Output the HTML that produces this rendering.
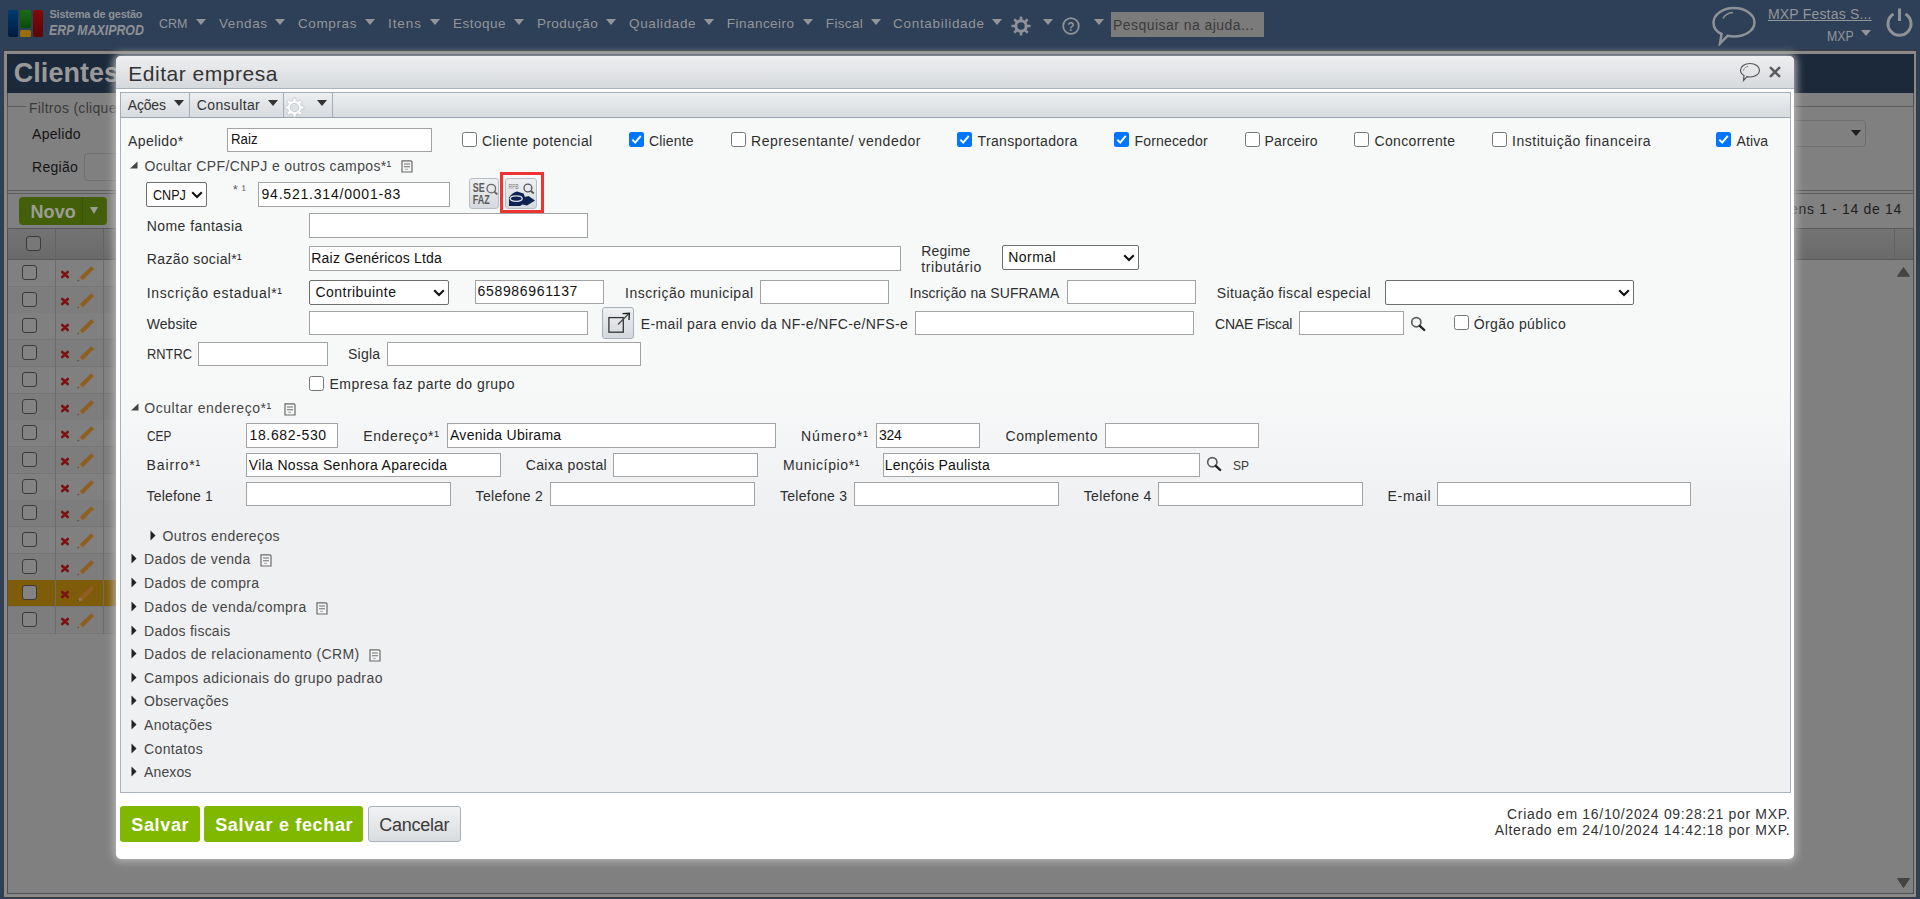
<!DOCTYPE html><html><head><meta charset="utf-8"><title>Editar empresa</title><style>
html,body{margin:0;padding:0;}body{width:1920px;height:899px;overflow:hidden;position:relative;background:#808080;font-family:"Liberation Sans",sans-serif;}
.t{position:absolute;white-space:nowrap;}
</style></head><body>
<div style="position:absolute;left:0px;top:0px;width:1920px;height:51px;box-sizing:border-box;background:#2e4058;"></div>
<div style="position:absolute;left:0px;top:50px;width:1920px;height:849px;box-sizing:border-box;background:#2e4058;"></div>
<div style="position:absolute;left:3px;top:50px;width:1914px;height:848px;box-sizing:border-box;background:#898989;border:1px solid #3c3c3c;"></div>
<div style="position:absolute;left:7px;top:54px;width:1907px;height:840px;box-sizing:border-box;background:#808080;border:1px solid #4e5058;"></div>
<div style="position:absolute;left:7px;top:54px;width:1907px;height:39px;box-sizing:border-box;background:#1b293a;"></div>
<div class="t" style="left:13.8px;top:57.64px;font-size:27px;line-height:31px;color:#999999;font-weight:bold;letter-spacing:0.029px;">Clientes</div>
<div style="position:absolute;left:7.5px;top:10px;width:10.5px;height:27px;box-sizing:border-box;background:linear-gradient(#003a6e,#001c3c);border-radius:2px;"></div>
<div style="position:absolute;left:20.4px;top:10px;width:10.5px;height:17.5px;box-sizing:border-box;background:linear-gradient(#1d6e14,#0b4a08);border-radius:2px;"></div>
<div style="position:absolute;left:20.4px;top:29.5px;width:10.5px;height:7.5px;box-sizing:border-box;background:#9a6e0c;border-radius:1.5px;"></div>
<div style="position:absolute;left:32.9px;top:10px;width:10.5px;height:27px;box-sizing:border-box;background:linear-gradient(#820a0a,#5c0505);border-radius:2px;"></div>
<div class="t" style="left:49.5px;top:8.44px;font-size:11px;line-height:13px;color:#8e9094;font-weight:bold;letter-spacing:-0.219px;">Sistema de gestão</div>
<div class="t" style="left:48.8px;top:22.15px;font-size:14px;line-height:16px;color:#8e9094;font-weight:bold;letter-spacing:0px;font-style:italic;transform:scaleX(0.8815);transform-origin:0px 0;">ERP MAXIPROD</div>
<div class="t" style="left:159px;top:16.32px;font-size:13.5px;line-height:16px;color:#939598;font-weight:normal;letter-spacing:0px;transform:scaleX(0.9258);transform-origin:0px 0;">CRM</div>
<svg style="position:absolute;left:196px;top:19px" width="10" height="6" viewBox="0 0 10 6"><path d="M0 0 H10 L5 6 Z" fill="#939598"/></svg>
<div class="t" style="left:219px;top:16.32px;font-size:13.5px;line-height:16px;color:#939598;font-weight:normal;letter-spacing:0.6px;">Vendas</div>
<svg style="position:absolute;left:275px;top:19px" width="10" height="6" viewBox="0 0 10 6"><path d="M0 0 H10 L5 6 Z" fill="#939598"/></svg>
<div class="t" style="left:298px;top:16.32px;font-size:13.5px;line-height:16px;color:#939598;font-weight:normal;letter-spacing:0.617px;">Compras</div>
<svg style="position:absolute;left:364.5px;top:19px" width="10" height="6" viewBox="0 0 10 6"><path d="M0 0 H10 L5 6 Z" fill="#939598"/></svg>
<div class="t" style="left:388px;top:16.32px;font-size:13.5px;line-height:16px;color:#939598;font-weight:normal;letter-spacing:0.925px;">Itens</div>
<svg style="position:absolute;left:429.5px;top:19px" width="10" height="6" viewBox="0 0 10 6"><path d="M0 0 H10 L5 6 Z" fill="#939598"/></svg>
<div class="t" style="left:453px;top:16.32px;font-size:13.5px;line-height:16px;color:#939598;font-weight:normal;letter-spacing:0.5px;">Estoque</div>
<svg style="position:absolute;left:513.8px;top:19px" width="10" height="6" viewBox="0 0 10 6"><path d="M0 0 H10 L5 6 Z" fill="#939598"/></svg>
<div class="t" style="left:537px;top:16.32px;font-size:13.5px;line-height:16px;color:#939598;font-weight:normal;letter-spacing:0.429px;">Produção</div>
<svg style="position:absolute;left:606px;top:19px" width="10" height="6" viewBox="0 0 10 6"><path d="M0 0 H10 L5 6 Z" fill="#939598"/></svg>
<div class="t" style="left:629px;top:16.32px;font-size:13.5px;line-height:16px;color:#939598;font-weight:normal;letter-spacing:0.625px;">Qualidade</div>
<svg style="position:absolute;left:703.8px;top:19px" width="10" height="6" viewBox="0 0 10 6"><path d="M0 0 H10 L5 6 Z" fill="#939598"/></svg>
<div class="t" style="left:726.8px;top:16.32px;font-size:13.5px;line-height:16px;color:#939598;font-weight:normal;letter-spacing:0.467px;">Financeiro</div>
<svg style="position:absolute;left:802.5px;top:19px" width="10" height="6" viewBox="0 0 10 6"><path d="M0 0 H10 L5 6 Z" fill="#939598"/></svg>
<div class="t" style="left:825.8px;top:16.32px;font-size:13.5px;line-height:16px;color:#939598;font-weight:normal;letter-spacing:0.34px;">Fiscal</div>
<svg style="position:absolute;left:870.5px;top:19px" width="10" height="6" viewBox="0 0 10 6"><path d="M0 0 H10 L5 6 Z" fill="#939598"/></svg>
<div class="t" style="left:893px;top:16.32px;font-size:13.5px;line-height:16px;color:#939598;font-weight:normal;letter-spacing:0.708px;">Contabilidade</div>
<svg style="position:absolute;left:992px;top:19px" width="10" height="6" viewBox="0 0 10 6"><path d="M0 0 H10 L5 6 Z" fill="#939598"/></svg>
<svg style="position:absolute;left:1011px;top:16px" width="20" height="20" viewBox="0 0 20 20"><g fill="#8e9296"><rect x="8.7" y="0.5" width="2.6" height="5" rx="0.6" transform="rotate(0 10 10)"/><rect x="8.7" y="0.5" width="2.6" height="5" rx="0.6" transform="rotate(45 10 10)"/><rect x="8.7" y="0.5" width="2.6" height="5" rx="0.6" transform="rotate(90 10 10)"/><rect x="8.7" y="0.5" width="2.6" height="5" rx="0.6" transform="rotate(135 10 10)"/><rect x="8.7" y="0.5" width="2.6" height="5" rx="0.6" transform="rotate(180 10 10)"/><rect x="8.7" y="0.5" width="2.6" height="5" rx="0.6" transform="rotate(225 10 10)"/><rect x="8.7" y="0.5" width="2.6" height="5" rx="0.6" transform="rotate(270 10 10)"/><rect x="8.7" y="0.5" width="2.6" height="5" rx="0.6" transform="rotate(315 10 10)"/></g><circle cx="10" cy="10" r="5.2" fill="none" stroke="#8e9296" stroke-width="3"/></svg>
<svg style="position:absolute;left:1043px;top:19px" width="10" height="6" viewBox="0 0 10 6"><path d="M0 0 H10 L5 6 Z" fill="#939598"/></svg>
<svg style="position:absolute;left:1062px;top:17px" width="18" height="18" viewBox="0 0 18 18"><circle cx="9" cy="9" r="7.8" fill="none" stroke="#8e9296" stroke-width="1.8"/><text x="9" y="13.5" text-anchor="middle" font-family="Liberation Sans" font-size="12" font-weight="bold" fill="#8e9296">?</text></svg>
<svg style="position:absolute;left:1094px;top:19px" width="10" height="6" viewBox="0 0 10 6"><path d="M0 0 H10 L5 6 Z" fill="#939598"/></svg>
<div style="position:absolute;left:1111px;top:12px;width:153px;height:25px;box-sizing:border-box;background:#7b7b7b;"></div>
<div class="t" style="left:1113px;top:16.65px;font-size:14px;line-height:16px;color:#3c3c3c;font-weight:normal;letter-spacing:0.45px;">Pesquisar na ajuda...</div>
<svg style="position:absolute;left:1711px;top:5px" width="46" height="41" viewBox="0 0 46 41"><path d="M23 3 C34 3 43.5 9.5 43.5 17.5 C43.5 25.5 34 31.5 23 31.5 C20.5 31.5 18.5 31.3 16.5 30.8 L9 38.5 L10.5 29 C5 26.5 2.5 22.5 2.5 17.5 C2.5 9.5 12 3 23 3 Z" fill="none" stroke="#8e9296" stroke-width="2.5"/><path d="M12 13.5 C14 9.5 18 7.8 22 7.5" fill="none" stroke="#8e9296" stroke-width="1.5"/></svg>
<div class="t" style="left:1768px;top:6.15px;font-size:14px;line-height:16px;color:#939598;font-weight:normal;letter-spacing:0.186px;text-decoration:underline;">MXP Festas S...</div>
<div class="t" style="left:1826.6px;top:27.65px;font-size:14px;line-height:16px;color:#939598;font-weight:normal;letter-spacing:0px;transform:scaleX(0.8800);transform-origin:0px 0;">MXP</div>
<svg style="position:absolute;left:1861px;top:30px" width="10" height="6" viewBox="0 0 10 6"><path d="M0 0 H10 L5 6 Z" fill="#939598"/></svg>
<svg style="position:absolute;left:1884px;top:6px" width="31" height="32" viewBox="0 0 31 32"><path d="M9.5 8 A11.5 11.5 0 1 0 21.5 8" fill="none" stroke="#8e9296" stroke-width="3"/><path d="M15.5 2.5 V15" stroke="#8e9296" stroke-width="3"/></svg>
<div style="position:absolute;left:7px;top:106px;width:1907px;height:85px;box-sizing:border-box;border:1px solid #5c5c5c;"></div>
<div style="position:absolute;left:26px;top:100px;width:100px;height:14px;box-sizing:border-box;background:#808080;"></div>
<div class="t" style="left:29px;top:100.15px;font-size:14px;line-height:16px;color:#3a3a3a;font-weight:normal;letter-spacing:0.3px;">Filtros (clique</div>
<div class="t" style="left:32px;top:126.15px;font-size:14px;line-height:16px;color:#141414;font-weight:normal;letter-spacing:0.3px;">Apelido</div>
<div class="t" style="left:32px;top:159.15px;font-size:14px;line-height:16px;color:#141414;font-weight:normal;letter-spacing:0.3px;">Região</div>
<div style="position:absolute;left:84px;top:153px;width:60px;height:28px;box-sizing:border-box;border:1px solid #6e6e6e;border-radius:4px;"></div>
<div style="position:absolute;left:1700px;top:120px;width:166px;height:27px;box-sizing:border-box;border:1px solid #6e6e6e;border-radius:4px;"></div>
<svg style="position:absolute;left:1851px;top:130px" width="10" height="6" viewBox="0 0 10 6"><path d="M0 0 H10 L5 6 Z" fill="#1e1e1e"/></svg>
<div style="position:absolute;left:7px;top:193px;width:1907px;height:36px;box-sizing:border-box;border:1px solid #5c5c5c;"></div>
<div class="t" style="left:1790px;top:201.15px;font-size:14px;line-height:16px;color:#1e1e1e;font-weight:normal;letter-spacing:0.667px;">ens 1 - 14 de 14</div>
<div style="position:absolute;left:19px;top:197px;width:88px;height:28px;box-sizing:border-box;background:#435f0a;border-radius:4px;"></div>
<div style="position:absolute;left:82px;top:197px;width:1px;height:28px;box-sizing:border-box;background:#3a5408;"></div>
<div class="t" style="left:30.5px;top:202.26px;font-size:18px;line-height:21px;color:#9b9e95;font-weight:bold;letter-spacing:0.1px;">Novo</div>
<svg style="position:absolute;left:90px;top:207px" width="8" height="7" viewBox="0 0 8 7"><path d="M0 0 H8 L4 7 Z" fill="#9b9e95"/></svg>
<div style="position:absolute;left:8px;top:228px;width:1905px;height:32px;box-sizing:border-box;background:linear-gradient(#737373,#6a6a6a);border-top:1px solid #585858;border-bottom:1px solid #585858;"></div>
<div style="position:absolute;left:55px;top:229px;width:1px;height:31px;box-sizing:border-box;background:#626262;"></div>
<div style="position:absolute;left:103px;top:229px;width:1px;height:31px;box-sizing:border-box;background:#626262;"></div>
<div style="position:absolute;left:1894px;top:229px;width:1px;height:31px;box-sizing:border-box;background:#626262;"></div>
<div style="position:absolute;left:26px;top:236px;width:15px;height:15px;box-sizing:border-box;border:1.5px solid #3a3a3a;border-radius:3px;background:#787878;"></div>
<div style="position:absolute;left:8px;top:260px;width:108px;height:27px;box-sizing:border-box;background:#808080;border-bottom:1px solid #757575;"></div>
<div style="position:absolute;left:55px;top:260px;width:1px;height:27px;box-sizing:border-box;background:#6c6c6c;"></div>
<div style="position:absolute;left:103px;top:260px;width:1px;height:27px;box-sizing:border-box;background:#6c6c6c;"></div>
<div style="position:absolute;left:22px;top:265px;width:15px;height:15px;box-sizing:border-box;border:1.5px solid #3a3a3a;border-radius:3px;background:#838383;"></div>
<svg style="position:absolute;left:60px;top:270px" width="10" height="9" viewBox="0 0 10 9"><path d="M2.2 2 L7.8 7 M7.8 2 L2.2 7" stroke="#7a1212" stroke-width="2.6" stroke-linecap="round"/></svg>
<svg style="position:absolute;left:76px;top:264px" width="19" height="19" viewBox="0 0 19 19"><path d="M3.8 13.2 L15.2 2.2 L18 5 L6.8 16.2 Z" fill="#8f5e22"/><path d="M1.2 17.6 L3.8 13.2 L6.8 16.2 Z" fill="#8a7a60"/><path d="M1.2 17.6 L2.2 15.8 L3 16.6 Z" fill="#333"/></svg>
<div style="position:absolute;left:8px;top:287px;width:108px;height:27px;box-sizing:border-box;background:#7d7d7d;border-bottom:1px solid #757575;"></div>
<div style="position:absolute;left:55px;top:287px;width:1px;height:27px;box-sizing:border-box;background:#6c6c6c;"></div>
<div style="position:absolute;left:103px;top:287px;width:1px;height:27px;box-sizing:border-box;background:#6c6c6c;"></div>
<div style="position:absolute;left:22px;top:292px;width:15px;height:15px;box-sizing:border-box;border:1.5px solid #3a3a3a;border-radius:3px;background:#838383;"></div>
<svg style="position:absolute;left:60px;top:297px" width="10" height="9" viewBox="0 0 10 9"><path d="M2.2 2 L7.8 7 M7.8 2 L2.2 7" stroke="#7a1212" stroke-width="2.6" stroke-linecap="round"/></svg>
<svg style="position:absolute;left:76px;top:291px" width="19" height="19" viewBox="0 0 19 19"><path d="M3.8 13.2 L15.2 2.2 L18 5 L6.8 16.2 Z" fill="#8f5e22"/><path d="M1.2 17.6 L3.8 13.2 L6.8 16.2 Z" fill="#8a7a60"/><path d="M1.2 17.6 L2.2 15.8 L3 16.6 Z" fill="#333"/></svg>
<div style="position:absolute;left:8px;top:313px;width:108px;height:27px;box-sizing:border-box;background:#808080;border-bottom:1px solid #757575;"></div>
<div style="position:absolute;left:55px;top:313px;width:1px;height:27px;box-sizing:border-box;background:#6c6c6c;"></div>
<div style="position:absolute;left:103px;top:313px;width:1px;height:27px;box-sizing:border-box;background:#6c6c6c;"></div>
<div style="position:absolute;left:22px;top:318px;width:15px;height:15px;box-sizing:border-box;border:1.5px solid #3a3a3a;border-radius:3px;background:#838383;"></div>
<svg style="position:absolute;left:60px;top:323px" width="10" height="9" viewBox="0 0 10 9"><path d="M2.2 2 L7.8 7 M7.8 2 L2.2 7" stroke="#7a1212" stroke-width="2.6" stroke-linecap="round"/></svg>
<svg style="position:absolute;left:76px;top:317px" width="19" height="19" viewBox="0 0 19 19"><path d="M3.8 13.2 L15.2 2.2 L18 5 L6.8 16.2 Z" fill="#8f5e22"/><path d="M1.2 17.6 L3.8 13.2 L6.8 16.2 Z" fill="#8a7a60"/><path d="M1.2 17.6 L2.2 15.8 L3 16.6 Z" fill="#333"/></svg>
<div style="position:absolute;left:8px;top:340px;width:108px;height:27px;box-sizing:border-box;background:#7d7d7d;border-bottom:1px solid #757575;"></div>
<div style="position:absolute;left:55px;top:340px;width:1px;height:27px;box-sizing:border-box;background:#6c6c6c;"></div>
<div style="position:absolute;left:103px;top:340px;width:1px;height:27px;box-sizing:border-box;background:#6c6c6c;"></div>
<div style="position:absolute;left:22px;top:345px;width:15px;height:15px;box-sizing:border-box;border:1.5px solid #3a3a3a;border-radius:3px;background:#838383;"></div>
<svg style="position:absolute;left:60px;top:350px" width="10" height="9" viewBox="0 0 10 9"><path d="M2.2 2 L7.8 7 M7.8 2 L2.2 7" stroke="#7a1212" stroke-width="2.6" stroke-linecap="round"/></svg>
<svg style="position:absolute;left:76px;top:344px" width="19" height="19" viewBox="0 0 19 19"><path d="M3.8 13.2 L15.2 2.2 L18 5 L6.8 16.2 Z" fill="#8f5e22"/><path d="M1.2 17.6 L3.8 13.2 L6.8 16.2 Z" fill="#8a7a60"/><path d="M1.2 17.6 L2.2 15.8 L3 16.6 Z" fill="#333"/></svg>
<div style="position:absolute;left:8px;top:367px;width:108px;height:27px;box-sizing:border-box;background:#808080;border-bottom:1px solid #757575;"></div>
<div style="position:absolute;left:55px;top:367px;width:1px;height:27px;box-sizing:border-box;background:#6c6c6c;"></div>
<div style="position:absolute;left:103px;top:367px;width:1px;height:27px;box-sizing:border-box;background:#6c6c6c;"></div>
<div style="position:absolute;left:22px;top:372px;width:15px;height:15px;box-sizing:border-box;border:1.5px solid #3a3a3a;border-radius:3px;background:#838383;"></div>
<svg style="position:absolute;left:60px;top:377px" width="10" height="9" viewBox="0 0 10 9"><path d="M2.2 2 L7.8 7 M7.8 2 L2.2 7" stroke="#7a1212" stroke-width="2.6" stroke-linecap="round"/></svg>
<svg style="position:absolute;left:76px;top:371px" width="19" height="19" viewBox="0 0 19 19"><path d="M3.8 13.2 L15.2 2.2 L18 5 L6.8 16.2 Z" fill="#8f5e22"/><path d="M1.2 17.6 L3.8 13.2 L6.8 16.2 Z" fill="#8a7a60"/><path d="M1.2 17.6 L2.2 15.8 L3 16.6 Z" fill="#333"/></svg>
<div style="position:absolute;left:8px;top:394px;width:108px;height:27px;box-sizing:border-box;background:#7d7d7d;border-bottom:1px solid #757575;"></div>
<div style="position:absolute;left:55px;top:394px;width:1px;height:27px;box-sizing:border-box;background:#6c6c6c;"></div>
<div style="position:absolute;left:103px;top:394px;width:1px;height:27px;box-sizing:border-box;background:#6c6c6c;"></div>
<div style="position:absolute;left:22px;top:399px;width:15px;height:15px;box-sizing:border-box;border:1.5px solid #3a3a3a;border-radius:3px;background:#838383;"></div>
<svg style="position:absolute;left:60px;top:404px" width="10" height="9" viewBox="0 0 10 9"><path d="M2.2 2 L7.8 7 M7.8 2 L2.2 7" stroke="#7a1212" stroke-width="2.6" stroke-linecap="round"/></svg>
<svg style="position:absolute;left:76px;top:398px" width="19" height="19" viewBox="0 0 19 19"><path d="M3.8 13.2 L15.2 2.2 L18 5 L6.8 16.2 Z" fill="#8f5e22"/><path d="M1.2 17.6 L3.8 13.2 L6.8 16.2 Z" fill="#8a7a60"/><path d="M1.2 17.6 L2.2 15.8 L3 16.6 Z" fill="#333"/></svg>
<div style="position:absolute;left:8px;top:420px;width:108px;height:27px;box-sizing:border-box;background:#808080;border-bottom:1px solid #757575;"></div>
<div style="position:absolute;left:55px;top:420px;width:1px;height:27px;box-sizing:border-box;background:#6c6c6c;"></div>
<div style="position:absolute;left:103px;top:420px;width:1px;height:27px;box-sizing:border-box;background:#6c6c6c;"></div>
<div style="position:absolute;left:22px;top:425px;width:15px;height:15px;box-sizing:border-box;border:1.5px solid #3a3a3a;border-radius:3px;background:#838383;"></div>
<svg style="position:absolute;left:60px;top:430px" width="10" height="9" viewBox="0 0 10 9"><path d="M2.2 2 L7.8 7 M7.8 2 L2.2 7" stroke="#7a1212" stroke-width="2.6" stroke-linecap="round"/></svg>
<svg style="position:absolute;left:76px;top:424px" width="19" height="19" viewBox="0 0 19 19"><path d="M3.8 13.2 L15.2 2.2 L18 5 L6.8 16.2 Z" fill="#8f5e22"/><path d="M1.2 17.6 L3.8 13.2 L6.8 16.2 Z" fill="#8a7a60"/><path d="M1.2 17.6 L2.2 15.8 L3 16.6 Z" fill="#333"/></svg>
<div style="position:absolute;left:8px;top:447px;width:108px;height:27px;box-sizing:border-box;background:#7d7d7d;border-bottom:1px solid #757575;"></div>
<div style="position:absolute;left:55px;top:447px;width:1px;height:27px;box-sizing:border-box;background:#6c6c6c;"></div>
<div style="position:absolute;left:103px;top:447px;width:1px;height:27px;box-sizing:border-box;background:#6c6c6c;"></div>
<div style="position:absolute;left:22px;top:452px;width:15px;height:15px;box-sizing:border-box;border:1.5px solid #3a3a3a;border-radius:3px;background:#838383;"></div>
<svg style="position:absolute;left:60px;top:457px" width="10" height="9" viewBox="0 0 10 9"><path d="M2.2 2 L7.8 7 M7.8 2 L2.2 7" stroke="#7a1212" stroke-width="2.6" stroke-linecap="round"/></svg>
<svg style="position:absolute;left:76px;top:451px" width="19" height="19" viewBox="0 0 19 19"><path d="M3.8 13.2 L15.2 2.2 L18 5 L6.8 16.2 Z" fill="#8f5e22"/><path d="M1.2 17.6 L3.8 13.2 L6.8 16.2 Z" fill="#8a7a60"/><path d="M1.2 17.6 L2.2 15.8 L3 16.6 Z" fill="#333"/></svg>
<div style="position:absolute;left:8px;top:474px;width:108px;height:27px;box-sizing:border-box;background:#808080;border-bottom:1px solid #757575;"></div>
<div style="position:absolute;left:55px;top:474px;width:1px;height:27px;box-sizing:border-box;background:#6c6c6c;"></div>
<div style="position:absolute;left:103px;top:474px;width:1px;height:27px;box-sizing:border-box;background:#6c6c6c;"></div>
<div style="position:absolute;left:22px;top:479px;width:15px;height:15px;box-sizing:border-box;border:1.5px solid #3a3a3a;border-radius:3px;background:#838383;"></div>
<svg style="position:absolute;left:60px;top:484px" width="10" height="9" viewBox="0 0 10 9"><path d="M2.2 2 L7.8 7 M7.8 2 L2.2 7" stroke="#7a1212" stroke-width="2.6" stroke-linecap="round"/></svg>
<svg style="position:absolute;left:76px;top:478px" width="19" height="19" viewBox="0 0 19 19"><path d="M3.8 13.2 L15.2 2.2 L18 5 L6.8 16.2 Z" fill="#8f5e22"/><path d="M1.2 17.6 L3.8 13.2 L6.8 16.2 Z" fill="#8a7a60"/><path d="M1.2 17.6 L2.2 15.8 L3 16.6 Z" fill="#333"/></svg>
<div style="position:absolute;left:8px;top:500px;width:108px;height:27px;box-sizing:border-box;background:#7d7d7d;border-bottom:1px solid #757575;"></div>
<div style="position:absolute;left:55px;top:500px;width:1px;height:27px;box-sizing:border-box;background:#6c6c6c;"></div>
<div style="position:absolute;left:103px;top:500px;width:1px;height:27px;box-sizing:border-box;background:#6c6c6c;"></div>
<div style="position:absolute;left:22px;top:505px;width:15px;height:15px;box-sizing:border-box;border:1.5px solid #3a3a3a;border-radius:3px;background:#838383;"></div>
<svg style="position:absolute;left:60px;top:510px" width="10" height="9" viewBox="0 0 10 9"><path d="M2.2 2 L7.8 7 M7.8 2 L2.2 7" stroke="#7a1212" stroke-width="2.6" stroke-linecap="round"/></svg>
<svg style="position:absolute;left:76px;top:504px" width="19" height="19" viewBox="0 0 19 19"><path d="M3.8 13.2 L15.2 2.2 L18 5 L6.8 16.2 Z" fill="#8f5e22"/><path d="M1.2 17.6 L3.8 13.2 L6.8 16.2 Z" fill="#8a7a60"/><path d="M1.2 17.6 L2.2 15.8 L3 16.6 Z" fill="#333"/></svg>
<div style="position:absolute;left:8px;top:527px;width:108px;height:27px;box-sizing:border-box;background:#808080;border-bottom:1px solid #757575;"></div>
<div style="position:absolute;left:55px;top:527px;width:1px;height:27px;box-sizing:border-box;background:#6c6c6c;"></div>
<div style="position:absolute;left:103px;top:527px;width:1px;height:27px;box-sizing:border-box;background:#6c6c6c;"></div>
<div style="position:absolute;left:22px;top:532px;width:15px;height:15px;box-sizing:border-box;border:1.5px solid #3a3a3a;border-radius:3px;background:#838383;"></div>
<svg style="position:absolute;left:60px;top:537px" width="10" height="9" viewBox="0 0 10 9"><path d="M2.2 2 L7.8 7 M7.8 2 L2.2 7" stroke="#7a1212" stroke-width="2.6" stroke-linecap="round"/></svg>
<svg style="position:absolute;left:76px;top:531px" width="19" height="19" viewBox="0 0 19 19"><path d="M3.8 13.2 L15.2 2.2 L18 5 L6.8 16.2 Z" fill="#8f5e22"/><path d="M1.2 17.6 L3.8 13.2 L6.8 16.2 Z" fill="#8a7a60"/><path d="M1.2 17.6 L2.2 15.8 L3 16.6 Z" fill="#333"/></svg>
<div style="position:absolute;left:8px;top:554px;width:108px;height:27px;box-sizing:border-box;background:#7d7d7d;border-bottom:1px solid #757575;"></div>
<div style="position:absolute;left:55px;top:554px;width:1px;height:27px;box-sizing:border-box;background:#6c6c6c;"></div>
<div style="position:absolute;left:103px;top:554px;width:1px;height:27px;box-sizing:border-box;background:#6c6c6c;"></div>
<div style="position:absolute;left:22px;top:559px;width:15px;height:15px;box-sizing:border-box;border:1.5px solid #3a3a3a;border-radius:3px;background:#838383;"></div>
<svg style="position:absolute;left:60px;top:564px" width="10" height="9" viewBox="0 0 10 9"><path d="M2.2 2 L7.8 7 M7.8 2 L2.2 7" stroke="#7a1212" stroke-width="2.6" stroke-linecap="round"/></svg>
<svg style="position:absolute;left:76px;top:558px" width="19" height="19" viewBox="0 0 19 19"><path d="M3.8 13.2 L15.2 2.2 L18 5 L6.8 16.2 Z" fill="#8f5e22"/><path d="M1.2 17.6 L3.8 13.2 L6.8 16.2 Z" fill="#8a7a60"/><path d="M1.2 17.6 L2.2 15.8 L3 16.6 Z" fill="#333"/></svg>
<div style="position:absolute;left:8px;top:580px;width:108px;height:27px;box-sizing:border-box;background:#7f5c0a;border-bottom:1px solid #757575;"></div>
<div style="position:absolute;left:55px;top:580px;width:1px;height:27px;box-sizing:border-box;background:#6c6c6c;"></div>
<div style="position:absolute;left:103px;top:580px;width:1px;height:27px;box-sizing:border-box;background:#6c6c6c;"></div>
<div style="position:absolute;left:22px;top:585px;width:15px;height:15px;box-sizing:border-box;border:1.5px solid #3a3a3a;border-radius:3px;background:#838383;"></div>
<svg style="position:absolute;left:60px;top:590px" width="10" height="9" viewBox="0 0 10 9"><path d="M2.2 2 L7.8 7 M7.8 2 L2.2 7" stroke="#7a1212" stroke-width="2.6" stroke-linecap="round"/></svg>
<svg style="position:absolute;left:76px;top:584px" width="19" height="19" viewBox="0 0 19 19"><path d="M3.8 13.2 L15.2 2.2 L18 5 L6.8 16.2 Z" fill="#8f5e22"/><path d="M1.2 17.6 L3.8 13.2 L6.8 16.2 Z" fill="#8a7a60"/><path d="M1.2 17.6 L2.2 15.8 L3 16.6 Z" fill="#333"/></svg>
<div style="position:absolute;left:8px;top:607px;width:108px;height:27px;box-sizing:border-box;background:#7d7d7d;border-bottom:1px solid #757575;"></div>
<div style="position:absolute;left:55px;top:607px;width:1px;height:27px;box-sizing:border-box;background:#6c6c6c;"></div>
<div style="position:absolute;left:103px;top:607px;width:1px;height:27px;box-sizing:border-box;background:#6c6c6c;"></div>
<div style="position:absolute;left:22px;top:612px;width:15px;height:15px;box-sizing:border-box;border:1.5px solid #3a3a3a;border-radius:3px;background:#838383;"></div>
<svg style="position:absolute;left:60px;top:617px" width="10" height="9" viewBox="0 0 10 9"><path d="M2.2 2 L7.8 7 M7.8 2 L2.2 7" stroke="#7a1212" stroke-width="2.6" stroke-linecap="round"/></svg>
<svg style="position:absolute;left:76px;top:611px" width="19" height="19" viewBox="0 0 19 19"><path d="M3.8 13.2 L15.2 2.2 L18 5 L6.8 16.2 Z" fill="#8f5e22"/><path d="M1.2 17.6 L3.8 13.2 L6.8 16.2 Z" fill="#8a7a60"/><path d="M1.2 17.6 L2.2 15.8 L3 16.6 Z" fill="#333"/></svg>
<svg style="position:absolute;left:1897px;top:267px" width="13" height="10" viewBox="0 0 13 10"><path d="M0.8 9.2 H12.2 L6.5 0.8 Z" fill="#444" stroke="#444" stroke-width="1.2" stroke-linejoin="round"/></svg>
<svg style="position:absolute;left:1897px;top:878px" width="13" height="10" viewBox="0 0 13 10"><path d="M0.5 0.5 H12.5 L6.5 9.5 Z" fill="#444" stroke="#444" stroke-linejoin="round"/></svg>
<div style="position:absolute;left:116px;top:56px;width:1678px;height:803px;background:#fff;border-radius:5px;box-shadow:0 0 9px 2px rgba(185,185,185,1);"></div>
<div style="position:absolute;left:116px;top:56px;width:1678px;height:33px;box-sizing:border-box;background:linear-gradient(#eeeff1,#d6d9dc);border-bottom:1px solid #aab2bb;border-radius:5px 5px 0 0;"></div>
<div class="t" style="left:128.3px;top:62.32px;font-size:21px;line-height:24px;color:#333;font-weight:normal;letter-spacing:0.515px;">Editar empresa</div>
<svg style="position:absolute;left:1739px;top:62px" width="22" height="20" viewBox="0 0 22 20"><path d="M11 1.5 C16.5 1.5 20.5 4.5 20.5 8.3 C20.5 12 16.5 15 11 15 C10 15 9 14.9 8 14.7 L4.5 18.5 L5 13.5 C2.8 12.3 1.5 10.4 1.5 8.3 C1.5 4.5 5.5 1.5 11 1.5 Z" fill="none" stroke="#555" stroke-width="1.2"/><path d="M4.5 8.5 C5 6 7 4.6 10 4.3" fill="none" stroke="#666" stroke-width="0.9" stroke-dasharray="1.6 0.8"/></svg>
<svg style="position:absolute;left:1769px;top:66px" width="12" height="12" viewBox="0 0 12 12"><path d="M1.8 1.8 L10.2 10.2 M10.2 1.8 L1.8 10.2" stroke="#5c5c5c" stroke-width="2.6" stroke-linecap="round"/></svg>
<div style="position:absolute;left:120px;top:92px;width:1671px;height:27px;box-sizing:border-box;background:linear-gradient(#eceef0,#d8dbdf);border:1px solid #a3adb8;border-bottom:2px solid #9ba5b0;"></div>
<div style="position:absolute;left:189px;top:93px;width:1px;height:24px;box-sizing:border-box;background:#a3adb8;"></div>
<div style="position:absolute;left:283px;top:93px;width:1px;height:24px;box-sizing:border-box;background:#a3adb8;"></div>
<div style="position:absolute;left:332px;top:93px;width:1px;height:24px;box-sizing:border-box;background:#a3adb8;"></div>
<div class="t" style="left:127.8px;top:96.55px;font-size:14px;line-height:16px;color:#333;font-weight:normal;letter-spacing:-0.2px;">Ações</div>
<svg style="position:absolute;left:174px;top:100px" width="10" height="6" viewBox="0 0 10 6"><path d="M0 0 H10 L5 6 Z" fill="#333"/></svg>
<div class="t" style="left:196.8px;top:96.55px;font-size:14px;line-height:16px;color:#333;font-weight:normal;letter-spacing:0.375px;">Consultar</div>
<svg style="position:absolute;left:268px;top:100px" width="10" height="6" viewBox="0 0 10 6"><path d="M0 0 H10 L5 6 Z" fill="#333"/></svg>
<svg style="position:absolute;left:284px;top:96.5px" width="21" height="21" viewBox="0 0 21 21"><path d="M7.82 4.03 L8.79 3.71 L8.92 1.03 L12.08 1.03 L12.21 3.71 L13.18 4.03 L14.09 4.49 L16.08 2.69 L18.31 4.92 L16.51 6.91 L16.97 7.82 L17.29 8.79 L19.97 8.92 L19.97 12.08 L17.29 12.21 L16.97 13.18 L16.51 14.09 L18.31 16.08 L16.08 18.31 L14.09 16.51 L13.18 16.97 L12.21 17.29 L12.08 19.97 L8.92 19.97 L8.79 17.29 L7.82 16.97 L6.91 16.51 L4.92 18.31 L2.69 16.08 L4.49 14.09 L4.03 13.18 L3.71 12.21 L1.03 12.08 L1.03 8.92 L3.71 8.79 L4.03 7.82 L4.49 6.91 L2.69 4.92 L4.92 2.69 L6.91 4.49 Z" fill="#fdfdfd" stroke="#c4c8cc" stroke-width="0.9" stroke-linejoin="round"/><circle cx="10.5" cy="10.5" r="4.2" fill="#dfe2e5" stroke="#c4c8cc" stroke-width="0.9"/></svg>
<svg style="position:absolute;left:317px;top:100px" width="10" height="6" viewBox="0 0 10 6"><path d="M0 0 H10 L5 6 Z" fill="#333"/></svg>
<div style="position:absolute;left:120px;top:118px;width:1671px;height:675px;box-sizing:border-box;background:linear-gradient(#f7f9f9 0px,#f7f9f9 270px,#eff0f2 390px,#eff0f2 100%);border:1px solid #a9b3bf;border-top:none;"></div>
<div class="t" style="left:128px;top:132.65px;font-size:14px;line-height:16px;color:#2e2e2e;font-weight:normal;letter-spacing:0.429px;">Apelido*</div>
<div style="position:absolute;left:227px;top:128px;width:205px;height:24px;box-sizing:border-box;background:#fff;border:1px solid #a3a3a3;"></div>
<div class="t" style="left:230.5px;top:131.15px;font-size:14px;line-height:16px;color:#111;font-weight:normal;letter-spacing:0px;transform:scaleX(0.9464);transform-origin:0px 0;">Raiz</div>
<div style="position:absolute;left:462px;top:132px;width:15px;height:15px;box-sizing:border-box;border:1px solid #767676;border-radius:2.5px;background:#fff"></div>
<div class="t" style="left:482px;top:133.15px;font-size:14px;line-height:16px;color:#2e2e2e;font-weight:normal;letter-spacing:0.419px;">Cliente potencial</div>
<svg style="position:absolute;left:629px;top:132px" width="15" height="15" viewBox="0 0 15 15"><rect x="0" y="0" width="15" height="15" rx="2.5" fill="#0075ff"/><path d="M3.3 7.6 L6.2 10.6 L11.8 3.8" fill="none" stroke="#fff" stroke-width="2"/></svg>
<div class="t" style="left:649px;top:133.15px;font-size:14px;line-height:16px;color:#2e2e2e;font-weight:normal;letter-spacing:0.167px;">Cliente</div>
<div style="position:absolute;left:731px;top:132px;width:15px;height:15px;box-sizing:border-box;border:1px solid #767676;border-radius:2.5px;background:#fff"></div>
<div class="t" style="left:751px;top:133.15px;font-size:14px;line-height:16px;color:#2e2e2e;font-weight:normal;letter-spacing:0.523px;">Representante/ vendedor</div>
<svg style="position:absolute;left:957px;top:132px" width="15" height="15" viewBox="0 0 15 15"><rect x="0" y="0" width="15" height="15" rx="2.5" fill="#0075ff"/><path d="M3.3 7.6 L6.2 10.6 L11.8 3.8" fill="none" stroke="#fff" stroke-width="2"/></svg>
<div class="t" style="left:977.5px;top:133.15px;font-size:14px;line-height:16px;color:#2e2e2e;font-weight:normal;letter-spacing:0.346px;">Transportadora</div>
<svg style="position:absolute;left:1114px;top:132px" width="15" height="15" viewBox="0 0 15 15"><rect x="0" y="0" width="15" height="15" rx="2.5" fill="#0075ff"/><path d="M3.3 7.6 L6.2 10.6 L11.8 3.8" fill="none" stroke="#fff" stroke-width="2"/></svg>
<div class="t" style="left:1134.5px;top:133.15px;font-size:14px;line-height:16px;color:#2e2e2e;font-weight:normal;letter-spacing:0.167px;">Fornecedor</div>
<div style="position:absolute;left:1245px;top:132px;width:15px;height:15px;box-sizing:border-box;border:1px solid #767676;border-radius:2.5px;background:#fff"></div>
<div class="t" style="left:1264.5px;top:133.15px;font-size:14px;line-height:16px;color:#2e2e2e;font-weight:normal;letter-spacing:0.143px;">Parceiro</div>
<div style="position:absolute;left:1354px;top:132px;width:15px;height:15px;box-sizing:border-box;border:1px solid #767676;border-radius:2.5px;background:#fff"></div>
<div class="t" style="left:1374.5px;top:133.15px;font-size:14px;line-height:16px;color:#2e2e2e;font-weight:normal;letter-spacing:0.35px;">Concorrente</div>
<div style="position:absolute;left:1492px;top:132px;width:15px;height:15px;box-sizing:border-box;border:1px solid #767676;border-radius:2.5px;background:#fff"></div>
<div class="t" style="left:1512px;top:133.15px;font-size:14px;line-height:16px;color:#2e2e2e;font-weight:normal;letter-spacing:0.524px;">Instituição financeira</div>
<svg style="position:absolute;left:1716px;top:132px" width="15" height="15" viewBox="0 0 15 15"><rect x="0" y="0" width="15" height="15" rx="2.5" fill="#0075ff"/><path d="M3.3 7.6 L6.2 10.6 L11.8 3.8" fill="none" stroke="#fff" stroke-width="2"/></svg>
<div class="t" style="left:1736.6px;top:133.15px;font-size:14px;line-height:16px;color:#2e2e2e;font-weight:normal;letter-spacing:0.1px;">Ativa</div>
<svg style="position:absolute;left:129px;top:160.5px" width="9" height="8" viewBox="0 0 9 8"><path d="M8.5 0.5 L8.5 7.5 L1 7.5 Z" fill="#444"/></svg>
<div class="t" style="left:144.4px;top:157.85px;font-size:14px;line-height:16px;color:#464646;font-weight:normal;letter-spacing:0.361px;">Ocultar CPF/CNPJ e outros campos*¹</div>
<svg style="position:absolute;left:400.5px;top:159.5px" width="12" height="13" viewBox="0 0 12 13"><path d="M1 0.8 H10 L11 1.8 V12 H1 Z" fill="#f4f4f4" stroke="#6a6a6a" stroke-width="1.2"/><path d="M3 4 H9 M3 6.8 H9" stroke="#6e6e6e" stroke-width="1.1"/><path d="M4 9.3 H7" stroke="#aaa" stroke-width="1"/></svg>
<div style="position:absolute;left:146px;top:182px;width:61px;height:25px;box-sizing:border-box;background:#fff;border:1px solid #6f6f6f;border-radius:2px;"></div>
<svg style="position:absolute;left:191px;top:191.0px" width="12" height="8" viewBox="0 0 12 8"><path d="M1.2 1.2 L6 6 L10.8 1.2" fill="none" stroke="#111" stroke-width="2.1"/></svg>
<div class="t" style="left:152.7px;top:186.85px;font-size:14px;line-height:16px;color:#111;font-weight:normal;letter-spacing:0px;transform:scaleX(0.9000);transform-origin:0px 0;">CNPJ</div>
<div class="t" style="left:233px;top:183.34px;font-size:12px;line-height:14px;color:#555;font-weight:normal;letter-spacing:4.0px;">*¹</div>
<div style="position:absolute;left:258px;top:182px;width:192px;height:25px;box-sizing:border-box;background:#fff;border:1px solid #a3a3a3;"></div>
<div class="t" style="left:261.5px;top:185.95px;font-size:14px;line-height:16px;color:#111;font-weight:normal;letter-spacing:0.794px;">94.521.314/0001-83</div>
<div style="position:absolute;left:469px;top:178px;width:30px;height:31px;box-sizing:border-box;background:linear-gradient(#eef0f2,#d6d9dd);border:1px solid #b9bdc3;border-radius:3px;"></div>
<svg style="position:absolute;left:469px;top:178px" width="30" height="31" viewBox="0 0 30 31"><text x="3.8" y="13.8" font-family="Liberation Sans" font-weight="bold" font-size="12" fill="#5a5a5a" textLength="12" lengthAdjust="spacingAndGlyphs">SE</text><text x="3.8" y="26" font-family="Liberation Sans" font-weight="bold" font-size="12.5" fill="#5a5a5a" textLength="17" lengthAdjust="spacingAndGlyphs">FAZ</text><circle cx="22.3" cy="10.6" r="4.3" fill="none" stroke="#6a6a6a" stroke-width="1.3"/><path d="M25.3 13.6 L28.3 16.5" stroke="#6a6a6a" stroke-width="2"/></svg>
<div style="position:absolute;left:505px;top:178px;width:32px;height:31px;box-sizing:border-box;background:linear-gradient(#eef0f2,#d6d9dd);border:1px solid #b9bdc3;border-radius:3px;"></div>
<svg style="position:absolute;left:505px;top:178px" width="32" height="31" viewBox="0 0 32 31"><text x="3.6" y="11.2" font-family="Liberation Sans" font-size="8" fill="#777" textLength="10" lengthAdjust="spacingAndGlyphs">RFB</text><circle cx="22.9" cy="10" r="3.9" fill="none" stroke="#555" stroke-width="1.3"/><path d="M25.6 12.7 L28.8 15.5" stroke="#555" stroke-width="1.8"/><path d="M4 28 L4 19.5 C6 16 9 14 12 13.5 L18.5 15.5 L20 19 L23.5 18 L30 22.5 L22 27.5 L17.5 26.5 L15 28 Z" fill="#0e2352"/><ellipse cx="11.2" cy="20.6" rx="6" ry="2.7" fill="none" stroke="#dfe3ea" stroke-width="1.3"/></svg>
<div style="position:absolute;left:500px;top:172px;width:44px;height:41px;box-sizing:border-box;border:3px solid #ee3333;"></div>
<div class="t" style="left:146.7px;top:217.65px;font-size:14px;line-height:16px;color:#2e2e2e;font-weight:normal;letter-spacing:0.442px;">Nome fantasia</div>
<div style="position:absolute;left:309px;top:213px;width:279px;height:25px;box-sizing:border-box;background:#fff;border:1px solid #a3a3a3;"></div>
<div class="t" style="left:146.75px;top:250.90px;font-size:14px;line-height:16px;color:#2e2e2e;font-weight:normal;letter-spacing:0.365px;">Razão social*¹</div>
<div style="position:absolute;left:309px;top:246px;width:592px;height:25px;box-sizing:border-box;background:#fff;border:1px solid #a3a3a3;"></div>
<div class="t" style="left:311.25px;top:250.15px;font-size:14px;line-height:16px;color:#111;font-weight:normal;letter-spacing:0.208px;">Raiz Genéricos Ltda</div>
<div class="t" style="left:921.25px;top:243.40px;font-size:14px;line-height:16px;color:#2e2e2e;font-weight:normal;letter-spacing:0.15px;">Regime</div>
<div class="t" style="left:921.25px;top:259.15px;font-size:14px;line-height:16px;color:#2e2e2e;font-weight:normal;letter-spacing:0.611px;">tributário</div>
<div style="position:absolute;left:1002px;top:245px;width:137px;height:25px;box-sizing:border-box;background:#fff;border:1px solid #6f6f6f;border-radius:2px;"></div>
<svg style="position:absolute;left:1123px;top:254.0px" width="12" height="8" viewBox="0 0 12 8"><path d="M1.2 1.2 L6 6 L10.8 1.2" fill="none" stroke="#111" stroke-width="2.1"/></svg>
<div class="t" style="left:1008.25px;top:249.15px;font-size:14px;line-height:16px;color:#111;font-weight:normal;letter-spacing:0.47px;">Normal</div>
<div class="t" style="left:146.75px;top:285.15px;font-size:14px;line-height:16px;color:#2e2e2e;font-weight:normal;letter-spacing:0.645px;">Inscrição estadual*¹</div>
<div style="position:absolute;left:309px;top:280px;width:140px;height:25px;box-sizing:border-box;background:#fff;border:1px solid #6f6f6f;border-radius:2px;"></div>
<svg style="position:absolute;left:433px;top:289.0px" width="12" height="8" viewBox="0 0 12 8"><path d="M1.2 1.2 L6 6 L10.8 1.2" fill="none" stroke="#111" stroke-width="2.1"/></svg>
<div class="t" style="left:315.5px;top:284.15px;font-size:14px;line-height:16px;color:#111;font-weight:normal;letter-spacing:0.455px;">Contribuinte</div>
<div style="position:absolute;left:475px;top:280px;width:129px;height:24px;box-sizing:border-box;background:#fff;border:1px solid #a3a3a3;"></div>
<div class="t" style="left:477.5px;top:283.15px;font-size:14px;line-height:16px;color:#111;font-weight:normal;letter-spacing:0.682px;">658986961137</div>
<div class="t" style="left:625px;top:284.65px;font-size:14px;line-height:16px;color:#2e2e2e;font-weight:normal;letter-spacing:0.5px;">Inscrição municipal</div>
<div style="position:absolute;left:760px;top:280px;width:129px;height:24px;box-sizing:border-box;background:#fff;border:1px solid #a3a3a3;"></div>
<div class="t" style="left:909.5px;top:284.65px;font-size:14px;line-height:16px;color:#2e2e2e;font-weight:normal;letter-spacing:0.105px;">Inscrição na SUFRAMA</div>
<div style="position:absolute;left:1067px;top:280px;width:129px;height:24px;box-sizing:border-box;background:#fff;border:1px solid #a3a3a3;"></div>
<div class="t" style="left:1216.75px;top:284.65px;font-size:14px;line-height:16px;color:#2e2e2e;font-weight:normal;letter-spacing:0.359px;">Situação fiscal especial</div>
<div style="position:absolute;left:1385px;top:280px;width:249px;height:25px;box-sizing:border-box;background:#fff;border:1px solid #6f6f6f;border-radius:2px;"></div>
<svg style="position:absolute;left:1618px;top:289.0px" width="12" height="8" viewBox="0 0 12 8"><path d="M1.2 1.2 L6 6 L10.8 1.2" fill="none" stroke="#111" stroke-width="2.1"/></svg>
<div class="t" style="left:146.75px;top:315.90px;font-size:14px;line-height:16px;color:#2e2e2e;font-weight:normal;letter-spacing:0.042px;">Website</div>
<div style="position:absolute;left:309px;top:311px;width:279px;height:24px;box-sizing:border-box;background:#fff;border:1px solid #a3a3a3;"></div>
<div style="position:absolute;left:602px;top:307px;width:32px;height:32px;box-sizing:border-box;background:linear-gradient(#eef0f2,#d4d7db);border:1px solid #a6b0bb;border-radius:3px;"></div>
<svg style="position:absolute;left:602px;top:307px" width="32" height="32" viewBox="0 0 32 32"><rect x="6.9" y="10.6" width="14.4" height="14.6" fill="none" stroke="#333" stroke-width="1.3"/><path d="M16 17.5 L26.5 7" stroke="#444" stroke-width="1.2"/><path d="M20.5 6.6 L27.4 6.2 L27 13" fill="none" stroke="#222" stroke-width="1.4"/></svg>
<div class="t" style="left:640.75px;top:315.90px;font-size:14px;line-height:16px;color:#2e2e2e;font-weight:normal;letter-spacing:0.396px;">E-mail para envio da NF-e/NFC-e/NFS-e</div>
<div style="position:absolute;left:915px;top:311px;width:279px;height:24px;box-sizing:border-box;background:#fff;border:1px solid #a3a3a3;"></div>
<div class="t" style="left:1215px;top:315.90px;font-size:14px;line-height:16px;color:#2e2e2e;font-weight:normal;letter-spacing:-0.2px;">CNAE Fiscal</div>
<div style="position:absolute;left:1299px;top:311px;width:105px;height:24px;box-sizing:border-box;background:#fff;border:1px solid #a3a3a3;"></div>
<svg style="position:absolute;left:1410px;top:315.5px" width="16" height="16" viewBox="0 0 16 16"><circle cx="6.3" cy="6.2" r="4.6" fill="#f6f6f6" stroke="#5e5e5e" stroke-width="1.7"/><path d="M9.8 9.8 L14.2 14" stroke="#222" stroke-width="2.4" stroke-linecap="round"/></svg>
<div style="position:absolute;left:1454px;top:315px;width:15px;height:15px;box-sizing:border-box;border:1px solid #767676;border-radius:2.5px;background:#fff"></div>
<div class="t" style="left:1473.75px;top:315.90px;font-size:14px;line-height:16px;color:#2e2e2e;font-weight:normal;letter-spacing:0.396px;">Órgão público</div>
<div class="t" style="left:146.75px;top:346.40px;font-size:14px;line-height:16px;color:#2e2e2e;font-weight:normal;letter-spacing:0px;transform:scaleX(0.9184);transform-origin:0px 0;">RNTRC</div>
<div style="position:absolute;left:198px;top:342px;width:130px;height:24px;box-sizing:border-box;background:#fff;border:1px solid #a3a3a3;"></div>
<div class="t" style="left:348px;top:346.40px;font-size:14px;line-height:16px;color:#2e2e2e;font-weight:normal;letter-spacing:0.25px;">Sigla</div>
<div style="position:absolute;left:387px;top:342px;width:254px;height:24px;box-sizing:border-box;background:#fff;border:1px solid #a3a3a3;"></div>
<div style="position:absolute;left:309px;top:375.5px;width:15px;height:15px;box-sizing:border-box;border:1px solid #767676;border-radius:2.5px;background:#fff"></div>
<div class="t" style="left:329.5px;top:375.90px;font-size:14px;line-height:16px;color:#2e2e2e;font-weight:normal;letter-spacing:0.46px;">Empresa faz parte do grupo</div>
<svg style="position:absolute;left:129.5px;top:403px" width="9" height="8" viewBox="0 0 9 8"><path d="M8.5 0.5 L8.5 7.5 L1 7.5 Z" fill="#444"/></svg>
<div class="t" style="left:144.25px;top:400.40px;font-size:14px;line-height:16px;color:#464646;font-weight:normal;letter-spacing:0.559px;">Ocultar endereço*¹</div>
<svg style="position:absolute;left:283.5px;top:403px" width="12" height="13" viewBox="0 0 12 13"><path d="M1 0.8 H10 L11 1.8 V12 H1 Z" fill="#f4f4f4" stroke="#6a6a6a" stroke-width="1.2"/><path d="M3 4 H9 M3 6.8 H9" stroke="#6e6e6e" stroke-width="1.1"/><path d="M4 9.3 H7" stroke="#aaa" stroke-width="1"/></svg>
<div class="t" style="left:146.75px;top:428.40px;font-size:14px;line-height:16px;color:#2e2e2e;font-weight:normal;letter-spacing:0px;transform:scaleX(0.8448);transform-origin:0px 0;">CEP</div>
<div style="position:absolute;left:246px;top:423px;width:92px;height:25px;box-sizing:border-box;background:#fff;border:1px solid #a3a3a3;"></div>
<div class="t" style="left:249.5px;top:427.15px;font-size:14px;line-height:16px;color:#111;font-weight:normal;letter-spacing:0.639px;">18.682-530</div>
<div class="t" style="left:363.25px;top:428.40px;font-size:14px;line-height:16px;color:#2e2e2e;font-weight:normal;letter-spacing:0.611px;">Endereço*¹</div>
<div style="position:absolute;left:447px;top:423px;width:329px;height:25px;box-sizing:border-box;background:#fff;border:1px solid #a3a3a3;"></div>
<div class="t" style="left:450px;top:427.15px;font-size:14px;line-height:16px;color:#111;font-weight:normal;letter-spacing:0.286px;">Avenida Ubirama</div>
<div class="t" style="left:801px;top:428.15px;font-size:14px;line-height:16px;color:#2e2e2e;font-weight:normal;letter-spacing:1.0px;">Número*¹</div>
<div style="position:absolute;left:876px;top:423px;width:104px;height:25px;box-sizing:border-box;background:#fff;border:1px solid #a3a3a3;"></div>
<div class="t" style="left:879px;top:427.15px;font-size:14px;line-height:16px;color:#111;font-weight:normal;letter-spacing:-0.25px;">324</div>
<div class="t" style="left:1005.6px;top:428.15px;font-size:14px;line-height:16px;color:#2e2e2e;font-weight:normal;letter-spacing:0.47px;">Complemento</div>
<div style="position:absolute;left:1105px;top:423px;width:154px;height:25px;box-sizing:border-box;background:#fff;border:1px solid #a3a3a3;"></div>
<div class="t" style="left:146.6px;top:457.15px;font-size:14px;line-height:16px;color:#2e2e2e;font-weight:normal;letter-spacing:0.871px;">Bairro*¹</div>
<div style="position:absolute;left:246px;top:453px;width:255px;height:24px;box-sizing:border-box;background:#fff;border:1px solid #a3a3a3;"></div>
<div class="t" style="left:248.8px;top:456.75px;font-size:14px;line-height:16px;color:#111;font-weight:normal;letter-spacing:0.322px;">Vila Nossa Senhora Aparecida</div>
<div class="t" style="left:525.7px;top:457.15px;font-size:14px;line-height:16px;color:#2e2e2e;font-weight:normal;letter-spacing:0.355px;">Caixa postal</div>
<div style="position:absolute;left:613px;top:453px;width:145px;height:24px;box-sizing:border-box;background:#fff;border:1px solid #a3a3a3;"></div>
<div class="t" style="left:783px;top:457.35px;font-size:14px;line-height:16px;color:#2e2e2e;font-weight:normal;letter-spacing:0.65px;">Município*¹</div>
<div style="position:absolute;left:883px;top:453px;width:317px;height:24px;box-sizing:border-box;background:#fff;border:1px solid #a3a3a3;"></div>
<div class="t" style="left:884.7px;top:456.75px;font-size:14px;line-height:16px;color:#111;font-weight:normal;letter-spacing:0.207px;">Lençóis Paulista</div>
<svg style="position:absolute;left:1206px;top:456px" width="16" height="16" viewBox="0 0 16 16"><circle cx="6.3" cy="6.2" r="4.6" fill="#f6f6f6" stroke="#5e5e5e" stroke-width="1.7"/><path d="M9.8 9.8 L14.2 14" stroke="#222" stroke-width="2.4" stroke-linecap="round"/></svg>
<div class="t" style="left:1232.8px;top:457.80px;font-size:13px;line-height:15px;color:#3a3a3a;font-weight:normal;letter-spacing:0px;transform:scaleX(0.9235);transform-origin:0px 0;">SP</div>
<div class="t" style="left:146.6px;top:487.65px;font-size:14px;line-height:16px;color:#2e2e2e;font-weight:normal;letter-spacing:0.178px;">Telefone 1</div>
<div style="position:absolute;left:246px;top:482px;width:205px;height:24px;box-sizing:border-box;background:#fff;border:1px solid #a3a3a3;"></div>
<div class="t" style="left:475.6px;top:487.65px;font-size:14px;line-height:16px;color:#2e2e2e;font-weight:normal;letter-spacing:0.3px;">Telefone 2</div>
<div style="position:absolute;left:550px;top:482px;width:205px;height:24px;box-sizing:border-box;background:#fff;border:1px solid #a3a3a3;"></div>
<div class="t" style="left:780px;top:487.65px;font-size:14px;line-height:16px;color:#2e2e2e;font-weight:normal;letter-spacing:0.267px;">Telefone 3</div>
<div style="position:absolute;left:854px;top:482px;width:205px;height:24px;box-sizing:border-box;background:#fff;border:1px solid #a3a3a3;"></div>
<div class="t" style="left:1083.8px;top:487.65px;font-size:14px;line-height:16px;color:#2e2e2e;font-weight:normal;letter-spacing:0.322px;">Telefone 4</div>
<div style="position:absolute;left:1158px;top:482px;width:205px;height:24px;box-sizing:border-box;background:#fff;border:1px solid #a3a3a3;"></div>
<div class="t" style="left:1387.5px;top:487.65px;font-size:14px;line-height:16px;color:#2e2e2e;font-weight:normal;letter-spacing:0.7px;">E-mail</div>
<div style="position:absolute;left:1437px;top:482px;width:254px;height:24px;box-sizing:border-box;background:#fff;border:1px solid #a3a3a3;"></div>
<svg style="position:absolute;left:149.6px;top:530px" width="6" height="11" viewBox="0 0 6 11"><path d="M0.5 0.5 L5.5 5.5 L0.5 10.5 Z" fill="#222"/></svg>
<div class="t" style="left:162.5px;top:528.35px;font-size:14px;line-height:16px;color:#464646;font-weight:normal;letter-spacing:0.387px;">Outros endereços</div>
<svg style="position:absolute;left:131px;top:552.7px" width="6" height="11" viewBox="0 0 6 11"><path d="M0.5 0.5 L5.5 5.5 L0.5 10.5 Z" fill="#222"/></svg>
<div class="t" style="left:144.1px;top:550.85px;font-size:14px;line-height:16px;color:#464646;font-weight:normal;letter-spacing:0.323px;">Dados de venda</div>
<svg style="position:absolute;left:260.1px;top:554.2px" width="12" height="13" viewBox="0 0 12 13"><path d="M1 0.8 H10 L11 1.8 V12 H1 Z" fill="#f4f4f4" stroke="#6a6a6a" stroke-width="1.2"/><path d="M3 4 H9 M3 6.8 H9" stroke="#6e6e6e" stroke-width="1.1"/><path d="M4 9.3 H7" stroke="#aaa" stroke-width="1"/></svg>
<svg style="position:absolute;left:131px;top:576.7px" width="6" height="11" viewBox="0 0 6 11"><path d="M0.5 0.5 L5.5 5.5 L0.5 10.5 Z" fill="#222"/></svg>
<div class="t" style="left:144.1px;top:574.85px;font-size:14px;line-height:16px;color:#464646;font-weight:normal;letter-spacing:0.321px;">Dados de compra</div>
<svg style="position:absolute;left:131px;top:600.7px" width="6" height="11" viewBox="0 0 6 11"><path d="M0.5 0.5 L5.5 5.5 L0.5 10.5 Z" fill="#222"/></svg>
<div class="t" style="left:144.1px;top:598.85px;font-size:14px;line-height:16px;color:#464646;font-weight:normal;letter-spacing:0.48px;">Dados de venda/compra</div>
<svg style="position:absolute;left:315.9px;top:602.2px" width="12" height="13" viewBox="0 0 12 13"><path d="M1 0.8 H10 L11 1.8 V12 H1 Z" fill="#f4f4f4" stroke="#6a6a6a" stroke-width="1.2"/><path d="M3 4 H9 M3 6.8 H9" stroke="#6e6e6e" stroke-width="1.1"/><path d="M4 9.3 H7" stroke="#aaa" stroke-width="1"/></svg>
<svg style="position:absolute;left:131px;top:624.5px" width="6" height="11" viewBox="0 0 6 11"><path d="M0.5 0.5 L5.5 5.5 L0.5 10.5 Z" fill="#222"/></svg>
<div class="t" style="left:144.1px;top:622.65px;font-size:14px;line-height:16px;color:#464646;font-weight:normal;letter-spacing:0.242px;">Dados fiscais</div>
<svg style="position:absolute;left:131px;top:647.6px" width="6" height="11" viewBox="0 0 6 11"><path d="M0.5 0.5 L5.5 5.5 L0.5 10.5 Z" fill="#222"/></svg>
<div class="t" style="left:144.1px;top:645.75px;font-size:14px;line-height:16px;color:#464646;font-weight:normal;letter-spacing:0.375px;">Dados de relacionamento (CRM)</div>
<svg style="position:absolute;left:368.8px;top:649.1px" width="12" height="13" viewBox="0 0 12 13"><path d="M1 0.8 H10 L11 1.8 V12 H1 Z" fill="#f4f4f4" stroke="#6a6a6a" stroke-width="1.2"/><path d="M3 4 H9 M3 6.8 H9" stroke="#6e6e6e" stroke-width="1.1"/><path d="M4 9.3 H7" stroke="#aaa" stroke-width="1"/></svg>
<svg style="position:absolute;left:131px;top:671.6px" width="6" height="11" viewBox="0 0 6 11"><path d="M0.5 0.5 L5.5 5.5 L0.5 10.5 Z" fill="#222"/></svg>
<div class="t" style="left:144.1px;top:669.75px;font-size:14px;line-height:16px;color:#464646;font-weight:normal;letter-spacing:0.419px;">Campos adicionais do grupo padrao</div>
<svg style="position:absolute;left:131px;top:695.3px" width="6" height="11" viewBox="0 0 6 11"><path d="M0.5 0.5 L5.5 5.5 L0.5 10.5 Z" fill="#222"/></svg>
<div class="t" style="left:144.1px;top:693.45px;font-size:14px;line-height:16px;color:#464646;font-weight:normal;letter-spacing:0.19px;">Observações</div>
<svg style="position:absolute;left:131px;top:719.3px" width="6" height="11" viewBox="0 0 6 11"><path d="M0.5 0.5 L5.5 5.5 L0.5 10.5 Z" fill="#222"/></svg>
<div class="t" style="left:144.1px;top:717.45px;font-size:14px;line-height:16px;color:#464646;font-weight:normal;letter-spacing:0.213px;">Anotações</div>
<svg style="position:absolute;left:131px;top:742.5px" width="6" height="11" viewBox="0 0 6 11"><path d="M0.5 0.5 L5.5 5.5 L0.5 10.5 Z" fill="#222"/></svg>
<div class="t" style="left:144.1px;top:740.65px;font-size:14px;line-height:16px;color:#464646;font-weight:normal;letter-spacing:0.357px;">Contatos</div>
<svg style="position:absolute;left:131px;top:766.2px" width="6" height="11" viewBox="0 0 6 11"><path d="M0.5 0.5 L5.5 5.5 L0.5 10.5 Z" fill="#222"/></svg>
<div class="t" style="left:144.1px;top:764.35px;font-size:14px;line-height:16px;color:#464646;font-weight:normal;letter-spacing:0.1px;">Anexos</div>
<div style="position:absolute;left:120px;top:806px;width:80px;height:36px;box-sizing:border-box;background:#80b800;border-radius:3px;"></div>
<div class="t" style="left:131.25px;top:814.76px;font-size:18px;line-height:21px;color:#fff;font-weight:bold;letter-spacing:0.65px;">Salvar</div>
<div style="position:absolute;left:204px;top:806px;width:159px;height:36px;box-sizing:border-box;background:#80b800;border-radius:3px;"></div>
<div class="t" style="left:215.2px;top:814.76px;font-size:18px;line-height:21px;color:#fff;font-weight:bold;letter-spacing:0.664px;">Salvar e fechar</div>
<div style="position:absolute;left:368px;top:806px;width:93px;height:36px;box-sizing:border-box;background:linear-gradient(#f1f2f4,#d9dcdf);border:1px solid #a9b0b8;border-radius:3px;"></div>
<div class="t" style="left:379.2px;top:814.76px;font-size:18px;line-height:21px;color:#3a3a3a;font-weight:normal;letter-spacing:-0.257px;">Cancelar</div>
<div class="t" style="left:1507px;top:806.35px;font-size:14px;line-height:16px;color:#333;font-weight:normal;letter-spacing:0.689px;">Criado em 16/10/2024 09:28:21 por MXP.</div>
<div class="t" style="left:1494.7px;top:822.35px;font-size:14px;line-height:16px;color:#333;font-weight:normal;letter-spacing:0.687px;">Alterado em 24/10/2024 14:42:18 por MXP.</div>
</body></html>
